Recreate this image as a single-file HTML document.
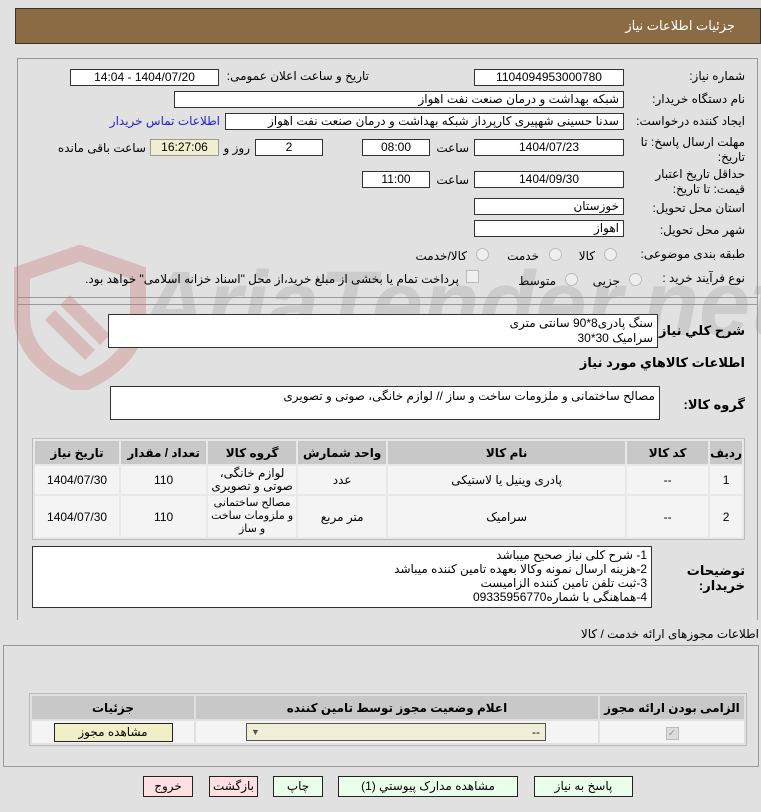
<!DOCTYPE html>
<html><head><meta charset="utf-8"><style>
*{box-sizing:border-box;margin:0;padding:0}
body{width:761px;height:812px;background:#e1e1e1;position:relative;overflow:hidden;font-family:"Liberation Sans","DejaVu Sans",sans-serif;font-size:12px;color:#000}
.a{position:absolute;white-space:nowrap}
.in{position:absolute;background:#fff;border:1px solid #333;height:17px;line-height:15px;font-size:12px;direction:rtl;padding:0 4px;white-space:nowrap;overflow:hidden}
.c{text-align:center}
.lbl{position:absolute;direction:rtl;text-align:right;font-size:12px;white-space:nowrap}
.b{font-weight:bold}
table{border-collapse:separate;border-spacing:2px;position:absolute;direction:rtl}
th{background:#c8c8c8;font-weight:bold;font-size:12px;height:23px}
td{background:#f4f4f4;text-align:center;font-size:12px}
.btn{position:absolute;border:1px solid #222;height:21px;line-height:19px;text-align:center;font-size:12px;background:#eaffea}
.red{background:#ffe0e0}
.rd{position:absolute;width:13px;height:13px;border-radius:50%;border:1px solid #bbb;background:#eee}
</style></head><body>
<div class="a" style="left:15px;top:8px;width:746px;height:36px;background:#8b6b44;border:1px solid #333"></div>
<div class="a" style="right:26px;top:18px;color:#fff;font-size:13px">جزئیات اطلاعات نیاز</div>

<div class="a" style="left:17px;top:58px;width:741px;height:562px;border:1px solid #999;border-bottom:none"></div>
<div class="a" style="left:17px;top:297px;width:741px;height:1px;background:#999"></div>
<div class="a" style="left:17px;top:304px;width:741px;height:1px;background:#999"></div>

<svg class="a" style="left:10px;top:245px" width="140" height="145" viewBox="0 0 140 145">
<path d="M70 8 L128 28 L128 70 Q128 115 70 140 Q12 115 12 70 L12 28 Z" fill="none" stroke="rgba(200,120,120,0.35)" stroke-width="16"/>
<path d="M40 70 L80 110 M55 55 L95 95" stroke="rgba(200,120,120,0.35)" stroke-width="14"/>
</svg>
<div class="a" style="left:140px;top:252px;font-size:92px;color:rgba(150,150,150,0.28);font-weight:bold;font-style:italic">AriaTender.net</div>

<div class="lbl" style="right:16px;top:69px">شماره نیاز:</div>
<div class="in c" style="left:474px;top:69px;width:150px">1104094953000780</div>
<div class="lbl" style="right:392px;top:69px">تاریخ و ساعت اعلان عمومی:</div>
<div class="in c" style="left:70px;top:69px;width:149px">1404/07/20 - 14:04</div>

<div class="lbl" style="right:16px;top:92px">نام دستگاه خریدار:</div>
<div class="in" style="left:174px;top:91px;width:450px">شبکه بهداشت و درمان صنعت نفت اهواز</div>

<div class="lbl" style="right:16px;top:114px">ایجاد کننده درخواست:</div>
<div class="in" style="left:225px;top:113px;width:399px">سدنا حسینی شهپیری کارپرداز شبکه بهداشت و درمان صنعت نفت اهواز</div>
<div class="lbl" style="right:541px;top:114px;color:#22c">اطلاعات تماس خریدار</div>

<div class="lbl" style="right:16px;top:135px;line-height:15px">مهلت ارسال پاسخ: تا<br>تاریخ:</div>
<div class="in c" style="left:474px;top:139px;width:150px">1404/07/23</div>
<div class="lbl" style="right:292px;top:141px">ساعت</div>
<div class="in c" style="left:362px;top:139px;width:68px">08:00</div>
<div class="in c" style="left:255px;top:139px;width:68px">2</div>
<div class="lbl" style="right:511px;top:141px">روز و</div>
<div class="in c" style="left:150px;top:139px;width:69px;background:#f0f0d0;border-color:#999">16:27:06</div>
<div class="lbl" style="right:615px;top:141px">ساعت باقی مانده</div>

<div class="lbl" style="right:16px;top:167px;line-height:15px">حداقل تاریخ اعتبار<br>قیمت: تا تاریخ:</div>
<div class="in c" style="left:474px;top:171px;width:150px">1404/09/30</div>
<div class="lbl" style="right:292px;top:173px">ساعت</div>
<div class="in c" style="left:362px;top:171px;width:68px">11:00</div>

<div class="lbl" style="right:16px;top:201px">استان محل تحویل:</div>
<div class="in" style="left:474px;top:198px;width:150px">خوزستان</div>
<div class="lbl" style="right:16px;top:223px">شهر محل تحویل:</div>
<div class="in" style="left:474px;top:220px;width:150px">اهواز</div>

<div class="lbl" style="right:16px;top:247px">طبقه بندی موضوعی:</div>
<div class="rd" style="left:604px;top:248px"></div>
<div class="lbl" style="right:166px;top:249px">کالا</div>
<div class="rd" style="left:549px;top:248px"></div>
<div class="lbl" style="right:222px;top:249px">خدمت</div>
<div class="rd" style="left:476px;top:248px"></div>
<div class="lbl" style="right:294px;top:249px">کالا/خدمت</div>

<div class="lbl" style="right:16px;top:271px">نوع فرآیند خرید :</div>
<div class="rd" style="left:629px;top:273px"></div>
<div class="lbl" style="right:141px;top:274px">جزیی</div>
<div class="rd" style="left:565px;top:273px"></div>
<div class="lbl" style="right:205px;top:274px">متوسط</div>
<div class="a" style="left:466px;top:270px;width:13px;height:13px;border:1px solid #bbb;background:#eee"></div>
<div class="lbl" style="right:302px;top:272px">پرداخت تمام یا بخشی از مبلغ خرید،از محل "اسناد خزانه اسلامی" خواهد بود.</div>

<div class="lbl b" style="right:16px;top:323px;font-size:13px">شرح کلي نیاز:</div>
<div class="in" style="left:108px;top:314px;width:550px;height:34px;line-height:15px;padding-top:1px">سنگ پادری8*90 سانتی متری<br>سرامیک 30*30</div>
<div class="lbl b" style="right:16px;top:355px;font-size:13px">اطلاعات کالاهاي مورد نیاز</div>

<div class="lbl b" style="right:16px;top:397px;font-size:13px">گروه کالا:</div>
<div class="in" style="left:110px;top:386px;width:550px;height:34px;padding-top:2px">مصالح ساختمانی و ملزومات ساخت و ساز // لوازم خانگی، صوتی و تصویری</div>

<div class="a" style="left:32px;top:438px;width:713px;height:102px;border:1px solid #bbb;background:#e8e8e8"></div>
<table style="left:33px;top:439px;width:711px">
<tr><th style="width:27px">ردیف</th><th style="width:81px">کد کالا</th><th style="width:237px">نام کالا</th><th style="width:88px">واحد شمارش</th><th style="width:88px">گروه کالا</th><th style="width:85px">تعداد / مقدار</th><th>تاریخ نیاز</th></tr>
<tr style="height:28px"><td>1</td><td>--</td><td>پادری وینیل یا لاستیکی</td><td>عدد</td><td style="line-height:13px;white-space:nowrap">لوازم خانگی،<br>صوتی و تصویری</td><td>110</td><td>1404/07/30</td></tr>
<tr style="height:41px"><td>2</td><td>--</td><td>سرامیک</td><td>متر مربع</td><td style="line-height:13px;white-space:nowrap;font-size:11px">مصالح ساختمانی<br>و ملزومات ساخت<br>و ساز</td><td>110</td><td>1404/07/30</td></tr>
</table>

<div class="lbl b" style="right:16px;top:563px;line-height:15px;font-size:13px">توضیحات<br>خریدار:</div>
<div class="in" style="left:32px;top:546px;width:620px;height:62px;line-height:14px;padding-top:1px">1- شرح کلی نیاز صحیح میباشد<br>2-هزینه ارسال نمونه وکالا بعهده تامین کننده میباشد<br>3-ثبت تلفن تامین کننده الزامیست<br>4-هماهنگی با شماره09335956770</div>

<div class="lbl" style="right:2px;top:627px">اطلاعات مجوزهای ارائه خدمت / کالا</div>
<div class="a" style="left:3px;top:645px;width:756px;height:122px;border:1px solid #999"></div>
<div class="a" style="left:29px;top:693px;width:718px;height:53px;border:1px solid #bbb"></div>
<table style="left:30px;top:694px;width:716px">
<tr><th style="width:144px">الزامی بودن ارائه مجوز</th><th style="width:402px">اعلام وضعیت مجوز توسط تامین کننده</th><th>جزئیات</th></tr>
<tr style="height:22px"><td><span style="display:inline-block;width:13px;height:13px;border:1px solid #bbb;background:#ddd;color:#999;font-size:10px;line-height:11px">✓</span></td>
<td><div style="margin:0 auto 0 50px;width:300px;height:18px;border:1px solid #555;background:#f0f0d8;direction:rtl;text-align:right;padding:0 5px;line-height:16px;position:relative">--<span style="position:absolute;left:4px;font-size:9px;color:#555">▼</span></div></td>
<td><div style="margin:0 auto;width:119px;height:19px;border:1px solid #222;background:#f0f0c8;line-height:17px;font-size:12px">مشاهده مجوز</div></td></tr>
</table>

<div class="btn" style="left:534px;top:776px;width:99px">پاسخ به نیاز</div>
<div class="btn" style="left:338px;top:776px;width:180px">مشاهده مدارک پیوستي (1)</div>
<div class="btn" style="left:273px;top:776px;width:50px">چاپ</div>
<div class="btn red" style="left:209px;top:776px;width:49px">بازگشت</div>
<div class="btn red" style="left:143px;top:776px;width:50px">خروج</div>
</body></html>
